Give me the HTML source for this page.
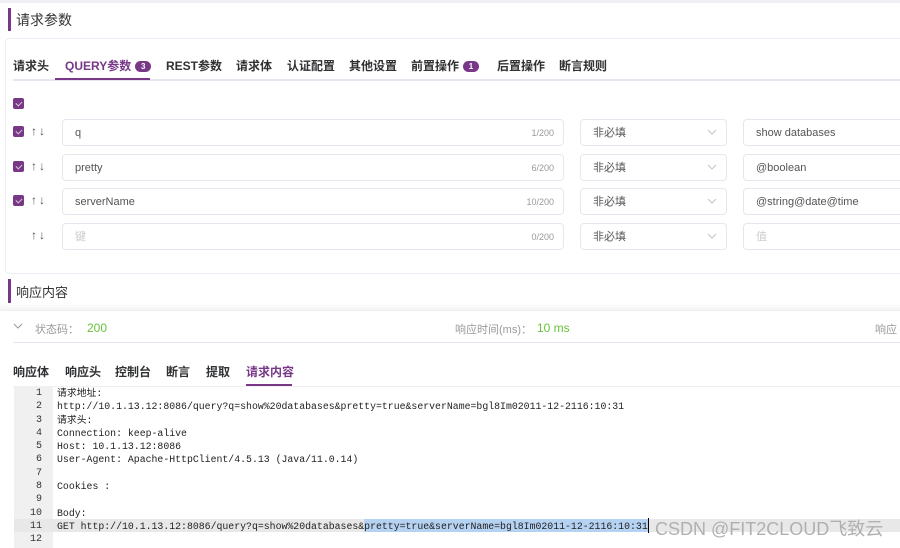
<!DOCTYPE html>
<html><head><meta charset="utf-8"><style>
*{margin:0;padding:0;box-sizing:border-box}
body{width:900px;height:548px;overflow:hidden;background:#fff;font-family:"Liberation Sans","Noto Sans CJK SC",sans-serif;color:#333;position:relative}
.a{position:absolute;white-space:nowrap}
.bar{position:absolute;width:3px;background:#783887}
.cb{position:absolute;width:11px;height:11px;background:#783887;border-radius:2px}
.cb:after{content:"";position:absolute;left:3.5px;top:1.5px;width:3px;height:5px;border:solid #d8c8dc;border-width:0 1px 1px 0;transform:rotate(45deg)}
.inp{position:absolute;height:27px;border:1px solid #e4e7ed;border-radius:4px;font-size:11px;line-height:26px;color:#555}
.tab{position:absolute;top:57px;font-size:12px;font-weight:bold;color:#303133}
.badge{display:inline-block;background:#783887;color:#fff;border-radius:7px;font-size:8px;line-height:11px;width:16px;text-align:center;vertical-align:1px;margin-left:4px}
.code{position:absolute;left:0;font-family:"Liberation Mono","Noto Sans CJK SC",monospace;font-size:9.85px;line-height:13.3px;color:#222}
.ln{position:absolute;left:14px;width:28px;text-align:right;font-family:"Liberation Mono",monospace;font-size:10px;line-height:13.3px;color:#333}
.arr{position:absolute;left:31px;font-size:12px;color:#555;letter-spacing:2px}
.chev{position:absolute;right:9px;top:9px}
</style></head><body>
<div class="a" style="left:0;top:0;width:900px;height:3px;background:#eef0f4"></div>
<div class="bar" style="left:8px;top:8px;height:23px"></div>
<div class="a" style="left:16px;top:10px;font-size:14px">请求参数</div>
<div class="a" style="left:5px;top:38px;width:900px;height:236px;border:1px solid #ebeef5;border-radius:4px"></div>
<div class="tab" style="left:13px">请求头</div>
<div class="tab" style="left:65px;color:#783887">QUERY参数<span class="badge">3</span></div>
<div class="tab" style="left:166px">REST参数</div>
<div class="tab" style="left:236px">请求体</div>
<div class="tab" style="left:287px">认证配置</div>
<div class="tab" style="left:349px">其他设置</div>
<div class="tab" style="left:411px">前置操作<span class="badge">1</span></div>
<div class="tab" style="left:497px">后置操作</div>
<div class="tab" style="left:559px">断言规则</div>
<div class="a" style="left:13px;top:79px;width:887px;height:2px;background:#e4e7ed"></div>
<div class="a" style="left:55px;top:78px;width:95px;height:2px;background:#783887"></div>
<div class="cb" style="left:13px;top:98px"></div>

<div class="cb" style="left:13px;top:126px"></div>
<div class="cb" style="left:13px;top:161px"></div>
<div class="cb" style="left:13px;top:195px"></div>
<div class="arr" style="top:124px">↑↓</div>
<div class="arr" style="top:159px">↑↓</div>
<div class="arr" style="top:193px">↑↓</div>
<div class="arr" style="top:228px">↑↓</div>

<div class="inp" style="left:62px;top:119px;width:502px;padding-left:12px">q<span style="position:absolute;right:9px;font-size:9px;color:#999">1/200</span></div>
<div class="inp" style="left:62px;top:154px;width:502px;padding-left:12px">pretty<span style="position:absolute;right:9px;font-size:9px;color:#999">6/200</span></div>
<div class="inp" style="left:62px;top:188px;width:502px;padding-left:12px">serverName<span style="position:absolute;right:9px;font-size:9px;color:#999">10/200</span></div>
<div class="inp" style="left:62px;top:223px;width:502px;padding-left:12px;color:#ccc">键<span style="position:absolute;right:9px;font-size:9px;color:#999">0/200</span></div>

<div class="inp" style="left:580px;top:119px;width:147px;padding-left:12px">非必填<svg class="chev" width="10" height="7"><path d="M1 1l4 4 4-4" stroke="#c0c4cc" fill="none"/></svg></div>
<div class="inp" style="left:580px;top:154px;width:147px;padding-left:12px">非必填<svg class="chev" width="10" height="7"><path d="M1 1l4 4 4-4" stroke="#c0c4cc" fill="none"/></svg></div>
<div class="inp" style="left:580px;top:188px;width:147px;padding-left:12px">非必填<svg class="chev" width="10" height="7"><path d="M1 1l4 4 4-4" stroke="#c0c4cc" fill="none"/></svg></div>
<div class="inp" style="left:580px;top:223px;width:147px;padding-left:12px">非必填<svg class="chev" width="10" height="7"><path d="M1 1l4 4 4-4" stroke="#c0c4cc" fill="none"/></svg></div>

<div class="inp" style="left:743px;top:119px;width:170px;padding-left:12px">show databases</div>
<div class="inp" style="left:743px;top:154px;width:170px;padding-left:12px">@boolean</div>
<div class="inp" style="left:743px;top:188px;width:170px;padding-left:12px">@string@date@time</div>
<div class="inp" style="left:743px;top:223px;width:170px;padding-left:12px;color:#ccc">值</div>

<div class="bar" style="left:8px;top:279px;height:24px"></div>
<div class="a" style="left:16px;top:282px;font-size:13px">响应内容</div>
<div class="a" style="left:0;top:303px;width:900px;height:8px;background:linear-gradient(#fff,#f2f2f2)"></div>
<div class="a" style="left:5px;top:310px;width:900px;height:238px;border-top:1px solid #eee"></div>
<svg class="a" style="left:13px;top:323px" width="10" height="7"><path d="M1 1l4 4 4-4" stroke="#999" fill="none"/></svg>
<div class="a" style="left:35px;top:321px;font-size:11px;color:#999">状态码：</div>
<div class="a" style="left:87px;top:321px;font-size:12px;color:#67c23a">200</div>
<div class="a" style="left:455px;top:321px;font-size:11px;color:#999">响应时间(ms)：</div>
<div class="a" style="left:537px;top:321px;font-size:12px;color:#67c23a">10 ms</div>
<div class="a" style="left:875px;top:321px;font-size:11px;color:#999">响应</div>
<div class="a" style="left:13px;top:342px;width:887px;height:1px;background:#e4e7ed"></div>

<div class="a" style="left:13px;top:363px;font-size:12px;font-weight:bold;color:#303133">响应体</div>
<div class="a" style="left:65px;top:363px;font-size:12px;font-weight:bold;color:#303133">响应头</div>
<div class="a" style="left:115px;top:363px;font-size:12px;font-weight:bold;color:#303133">控制台</div>
<div class="a" style="left:166px;top:363px;font-size:12px;font-weight:bold;color:#303133">断言</div>
<div class="a" style="left:206px;top:363px;font-size:12px;font-weight:bold;color:#303133">提取</div>
<div class="a" style="left:246px;top:363px;font-size:12px;font-weight:bold;color:#783887">请求内容</div>
<div class="a" style="left:246px;top:384px;width:46px;height:2px;background:#783887"></div>
<div class="a" style="left:13px;top:386px;width:887px;height:1px;background:#f0f0f0"></div>

<div class="a" style="left:14px;top:387px;width:39px;height:161px;background:#f0f0f0"></div>
<div class="a" style="left:14px;top:519px;width:886px;height:13px;background:#e8e8e8"></div>
<div class="a" style="left:364px;top:519px;width:284px;height:13px;background:#b6d2f2"></div>
<div class="a" style="left:648px;top:518px;width:1px;height:15px;background:#000"></div>
<div class="ln" style="top:387px">1<br>2<br>3<br>4<br>5<br>6<br>7<br>8<br>9<br>10<br>11<br>12</div>
<div class="code" style="left:57px;top:387px">请求地址:<br>http://10.1.13.12:8086/query?q=show%20databases&amp;pretty=true&amp;serverName=bgl8Im02011-12-2116:10:31<br>请求头:<br>Connection: keep-alive<br>Host: 10.1.13.12:8086<br>User-Agent: Apache-HttpClient/4.5.13 (Java/11.0.14)<br>&nbsp;<br>Cookies :<br>&nbsp;<br>Body:<br>GET http://10.1.13.12:8086/query?q=show%20databases&amp;pretty=true&amp;serverName=bgl8Im02011-12-2116:10:31</div>
<div class="a" style="left:655px;top:515px;font-size:18px;color:#b0b0b0">CSDN @FIT2CLOUD飞致云</div>
</body></html>
